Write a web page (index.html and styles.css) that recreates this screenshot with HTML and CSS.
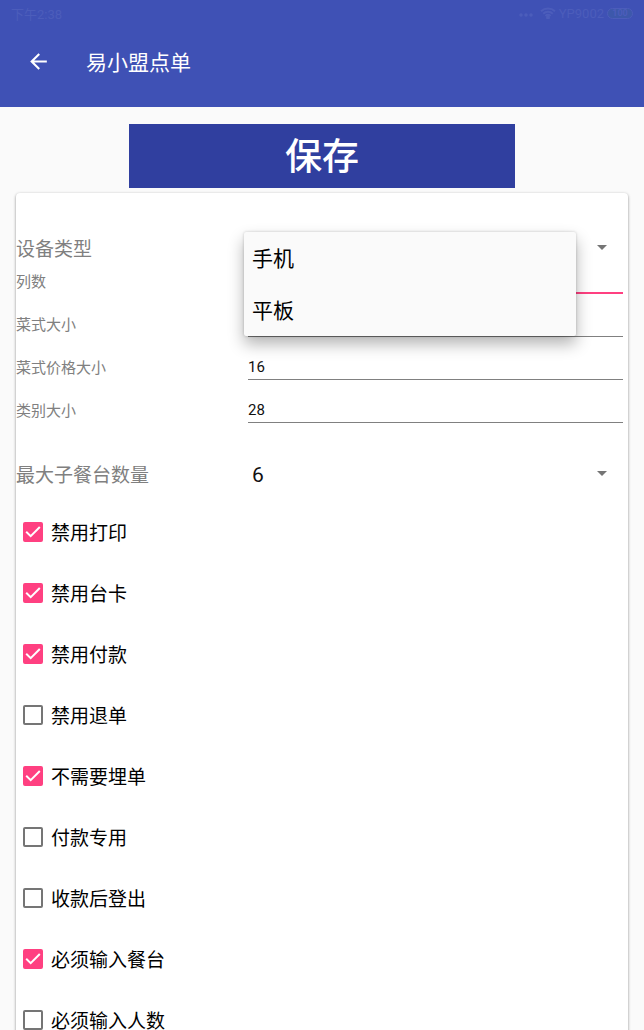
FILE: index.html
```html
<!DOCTYPE html>
<html lang="zh-CN">
<head>
<meta charset="utf-8">
<meta name="viewport" content="width=device-width, initial-scale=1">
<title>易小盟点单</title>
<link rel="stylesheet" href="styles.css">
</head>
<body>
<div class="screen">
  <header class="app-bar">
    <div class="status-bar">
      <span>下午2:38</span>
      <div class="status-icons">
        <svg class="dots" width="14" height="6" viewBox="0 0 14 6"><circle cx="2" cy="3" r="1.8"/><circle cx="7" cy="3" r="1.8"/><circle cx="12" cy="3" r="1.8"/></svg>
        <svg class="wifi" width="16" height="12" viewBox="0 0 16 12"><path d="M1 4.2a10.5 10.5 0 0 1 14 0M3.2 6.7a7 7 0 0 1 9.6 0M5.4 9a4 4 0 0 1 5.2 0"/><circle cx="8" cy="10.5" r="1"/></svg>
        <span>YP9002</span>
        <span class="battery">100</span>
      </div>
    </div>
    <div class="toolbar">
      <button class="back" type="button" aria-label="返回">
        <svg width="25" height="25" viewBox="0 0 24 24"><path d="M20 11H7.83l5.59-5.59L12 4l-8 8 8 8 1.41-1.41L7.83 13H20v-2z"/></svg>
      </button>
      <h1 class="title">易小盟点单</h1>
    </div>
  </header>
  <main class="content">
    <button class="save" type="button">保存</button>
    <form class="card">
      <div class="row row-device">
        <label class="label label-large" for="device">设备类型</label>
        <div class="spinner">
          <select id="device"><option>手机</option><option>平板</option></select>
          <svg class="caret" width="10" height="5" viewBox="0 0 10 5"><path d="M0 0h10L5 5z"/></svg>
          <div class="menu" role="listbox" aria-label="设备类型">
            <button class="menu-item" type="button" role="option">手机</button>
            <button class="menu-item" type="button" role="option">平板</button>
          </div>
        </div>
      </div>
      <div class="row"><label class="label" for="cols">列数</label><input class="field field-active" id="cols" type="text"></div>
      <div class="row"><label class="label" for="dish">菜式大小</label><input class="field" id="dish" type="text"></div>
      <div class="row"><label class="label" for="price">菜式价格大小</label><input class="field" id="price" type="text" value="16"></div>
      <div class="row"><label class="label" for="category">类别大小</label><input class="field" id="category" type="text" value="28"></div>
      <div class="row row-tables">
        <label class="label label-large" for="tables">最大子餐台数量</label>
        <div class="spinner">
          <select id="tables"><option>6</option></select>
          <svg class="caret" width="10" height="5" viewBox="0 0 10 5"><path d="M0 0h10L5 5z"/></svg>
        </div>
      </div>
      <label class="check"><input type="checkbox" checked><svg class="tick" viewBox="0 0 20 20"><path d="M3.2 9.7l4.5 4.5L16.8 5"/></svg><span>禁用打印</span></label>
      <label class="check"><input type="checkbox" checked><svg class="tick" viewBox="0 0 20 20"><path d="M3.2 9.7l4.5 4.5L16.8 5"/></svg><span>禁用台卡</span></label>
      <label class="check"><input type="checkbox" checked><svg class="tick" viewBox="0 0 20 20"><path d="M3.2 9.7l4.5 4.5L16.8 5"/></svg><span>禁用付款</span></label>
      <label class="check"><input type="checkbox"><svg class="tick" viewBox="0 0 20 20"><path d="M3.2 9.7l4.5 4.5L16.8 5"/></svg><span>禁用退单</span></label>
      <label class="check"><input type="checkbox" checked><svg class="tick" viewBox="0 0 20 20"><path d="M3.2 9.7l4.5 4.5L16.8 5"/></svg><span>不需要埋单</span></label>
      <label class="check"><input type="checkbox"><svg class="tick" viewBox="0 0 20 20"><path d="M3.2 9.7l4.5 4.5L16.8 5"/></svg><span>付款专用</span></label>
      <label class="check"><input type="checkbox"><svg class="tick" viewBox="0 0 20 20"><path d="M3.2 9.7l4.5 4.5L16.8 5"/></svg><span>收款后登出</span></label>
      <label class="check"><input type="checkbox" checked><svg class="tick" viewBox="0 0 20 20"><path d="M3.2 9.7l4.5 4.5L16.8 5"/></svg><span>必须输入餐台</span></label>
      <label class="check"><input type="checkbox"><svg class="tick" viewBox="0 0 20 20"><path d="M3.2 9.7l4.5 4.5L16.8 5"/></svg><span>必须输入人数</span></label>
    </form>
  </main>
</div>
</body>
</html>
```

FILE: styles.css
```css
* {
  box-sizing: border-box;
}

body {
  margin: 0;
  background: #fafafa;
  color: #111;
  font-family: Roboto, "Noto Sans CJK SC", sans-serif;
}

button,
input,
select {
  margin: 0;
  padding: 0;
  border: 0;
  border-radius: 0;
  outline: 0;
  background: none;
  color: inherit;
  font: inherit;
  appearance: none;
}

.screen {
  display: flex;
  flex-direction: column;
  height: 100vh;
}

.app-bar {
  flex: none;
  padding-bottom: 13px;
  background: #3f51b5;
  color: #fff;
}

.status-bar {
  display: flex;
  align-items: center;
  justify-content: space-between;
  height: 28px;
  padding: 0 11px 2px;
  color: #4c5dbb;
  font-size: 13px;
}

.status-icons {
  display: flex;
  align-items: center;
  gap: 3px;
}

.dots {
  margin: 4px 4px 0 0;
  fill: currentColor;
}

.wifi {
  fill: none;
  stroke: currentColor;
  stroke-width: 2;
}

.battery {
  width: 26px;
  border: 1px solid #4c5dbb;
  border-radius: 6px;
  background: #3d58ab;
  font-size: 9px;
  font-weight: 700;
  line-height: 9px;
  text-align: center;
}

.toolbar {
  display: flex;
  align-items: center;
  gap: 35px;
  height: 66px;
  padding-left: 26px;
}

.back {
  display: flex;
}

.back svg {
  fill: #fff;
}

.title {
  margin: 0;
  font-size: 21px;
  font-weight: 400;
}

.content {
  display: flex;
  flex: 1;
  flex-direction: column;
  gap: 5px;
  min-height: 0;
  padding: 17px 16px 0;
  overflow: hidden;
}

.save {
  flex: none;
  align-self: center;
  width: 60vw;
  height: 64px;
  padding-top: 4px;
  background: #303f9f;
  color: #fff;
  font-size: 37px;
  font-weight: 500;
  line-height: 60px;
}

.card {
  flex: none;
  padding-top: 41px;
  border-radius: 4px;
  background: #fff;
  box-shadow: 0 1px 3px rgba(0, 0, 0, 0.45);
}

.row {
  display: grid;
  grid-template-columns: 232px 1fr;
  align-items: center;
  height: 43px;
  padding-right: 5px;
}

.row-device {
  height: 26px;
}

.row-tables {
  height: 69px;
  padding-top: 16px;
}

.label {
  padding-bottom: 2px;
  color: #808080;
  font-size: 15px;
}

.label-large {
  font-size: 19px;
}

.field {
  width: 100%;
  height: 25px;
  border-bottom: 1px solid #808080;
  font-size: 15px;
}

.field-active {
  border-bottom: 2px solid #ff4081;
}

.spinner {
  position: relative;
}

.spinner select {
  display: block;
  width: 100%;
  padding-left: 4px;
  font-size: 21px;
  line-height: 26px;
}

.caret {
  position: absolute;
  top: 50%;
  right: 16px;
  margin-top: -4px;
  fill: #757575;
}

.menu {
  position: absolute;
  z-index: 1;
  top: -4px;
  right: 47px;
  left: -4px;
  border-radius: 2px;
  background: #fafafa;
  box-shadow: 0 8px 16px rgba(0, 0, 0, 0.3), 0 0 3px rgba(0, 0, 0, 0.2);
}

.menu-item {
  display: block;
  width: 100%;
  height: 52px;
  padding: 0 0 2px 8px;
  color: #000;
  font-size: 21px;
  text-align: left;
}

.check {
  position: relative;
  display: flex;
  align-items: center;
  gap: 8px;
  height: 61px;
  padding-left: 7px;
  color: #000;
  font-size: 19px;
}

.check input {
  width: 20px;
  height: 20px;
  border: 2px solid #757575;
  border-radius: 2px;
}

.check input:checked {
  border-color: #ff4081;
  background: #ff4081;
}

.tick {
  position: absolute;
  left: 7px;
  width: 20px;
  height: 20px;
  fill: none;
  stroke: #fff;
  stroke-width: 2;
  pointer-events: none;
}
```
